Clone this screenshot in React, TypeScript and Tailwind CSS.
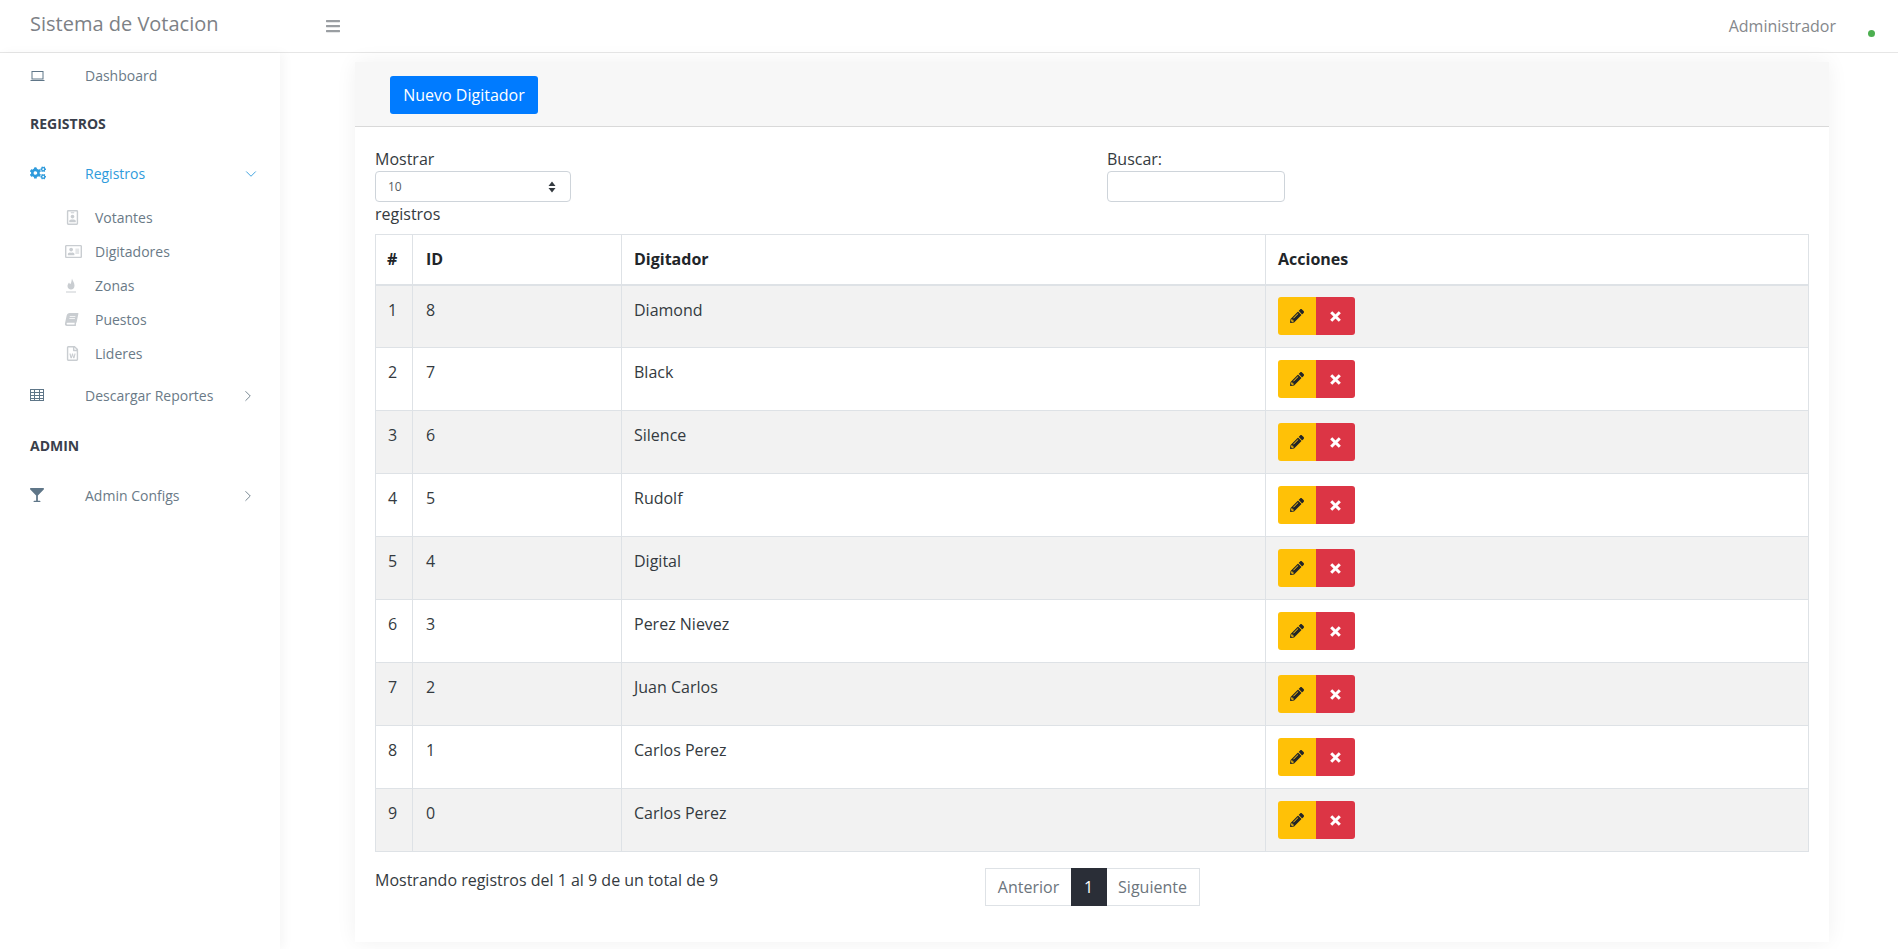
import React from 'react';
import { ChevronDown, ChevronRight } from 'lucide-react';
import {
  FaBars,
  FaBook,
  FaCogs,
  FaGlassMartini,
  FaPencilAlt,
  FaRegAddressCard,
  FaRegFileWord,
  FaRegIdBadge,
} from 'react-icons/fa';

const rows = [
  { n: 1, id: 8, name: 'Diamond' },
  { n: 2, id: 7, name: 'Black' },
  { n: 3, id: 6, name: 'Silence' },
  { n: 4, id: 5, name: 'Rudolf' },
  { n: 5, id: 4, name: 'Digital' },
  { n: 6, id: 3, name: 'Perez Nievez' },
  { n: 7, id: 2, name: 'Juan Carlos' },
  { n: 8, id: 1, name: 'Carlos Perez' },
  { n: 9, id: 0, name: 'Carlos Perez' },
];

const FlameIcon = () => (
  <svg width="12" height="15" viewBox="0 0 12 15" fill="#c9cdd1">
    <path d="M7 0.5C7.5 3 9.5 4.5 9.5 7.5 9.5 10 8 11.5 6 11.5S2.5 10 2.5 8C2.5 6.5 3.5 5.5 4 4.5 4.5 5.5 5 6 5.5 6 6.5 4.5 6.5 2.5 7 0.5Z" />
    <rect x="1" y="13.5" width="10" height="1" />
  </svg>
);

const subItems = [
  { label: 'Votantes', icon: <FaRegIdBadge className="text-[15px]" /> },
  { label: 'Digitadores', icon: <FaRegAddressCard className="text-[17px]" /> },
  { label: 'Zonas', icon: <FlameIcon /> },
  { label: 'Puestos', icon: <FaBook className="text-[13px] -skew-x-12" /> },
  { label: 'Lideres', icon: <FaRegFileWord className="text-[15px]" /> },
];

const LaptopIcon = () => (
  <svg width="15" height="12" viewBox="0 0 15 12" fill="none" stroke="#5f7688" strokeWidth="1" className="mt-[2px]">
    <rect x="2" y="1.5" width="11" height="7.5" />
    <path d="M0.5 10.5h14" />
  </svg>
);

const TableIcon = () => (
  <svg width="14" height="12" viewBox="0 0 14 12" fill="none" stroke="#5f7688" strokeWidth="1">
    <rect x="0.5" y="0.5" width="13" height="11" />
    <path d="M0.5 3.5h13M0.5 6.5h13M0.5 9.5h13M4.5 0.5v11M9.5 0.5v11" />
  </svg>
);

const CloseIcon = () => (
  <svg width="11" height="11" viewBox="0 0 11 11" fill="none" stroke="#ffffff" strokeWidth="3">
    <path d="M1.2 1.2 9.8 9.8M9.8 1.2 1.2 9.8" />
  </svg>
);

const Sidebar = () => {
  return (
    <aside className="w-[280px] shrink-0 h-[896px] bg-white shadow-[4px_0_10px_rgba(0,0,0,0.04)] text-[14px] text-[#6a7a87]">
      <div className="flex items-center h-[44px] pl-[30px]">
        <span className="w-[55px] flex"><LaptopIcon /></span>
        <span>Dashboard</span>
      </div>
      <div className="pl-[30px] mt-[17px] h-[20px] leading-[20px] text-[14px] font-bold text-[#3a3f4b]">REGISTROS</div>
      <div className="flex items-center h-[44px] mt-[17px] pl-[30px] pr-[20px] text-[#2f9bdc]">
        <span className="w-[55px] flex"><FaCogs className="text-[16px]" /></span>
        <span className="flex-1">Registros</span>
        <ChevronDown size={18} strokeWidth={1.2} className="mt-[2px]" />
      </div>
      <div className="mt-[5px]">
        {subItems.map((s) => (
          <div key={s.label} className="flex items-center h-[34px] pl-[65px]">
            <span className="w-[30px] flex text-[#c9cdd1]">{s.icon}</span>
            <span>{s.label}</span>
          </div>
        ))}
      </div>
      <div className="flex items-center h-[50px] pl-[30px] pr-[23px]">
        <span className="w-[55px] flex"><TableIcon /></span>
        <span className="flex-1">Descargar Reportes</span>
        <ChevronRight size={18} strokeWidth={1.2} className="mt-[2px]" />
      </div>
      <div className="pl-[30px] mt-[16px] h-[20px] leading-[20px] text-[14px] font-bold text-[#3a3f4b]">ADMIN</div>
      <div className="flex items-center h-[50px] mt-[14px] pl-[30px] pr-[23px]">
        <span className="w-[55px] flex"><FaGlassMartini className="text-[14px] text-[#5f7688]" /></span>
        <span className="flex-1">Admin Configs</span>
        <ChevronRight size={18} strokeWidth={1.2} className="mt-[2px]" />
      </div>
    </aside>
  );
};

const App: React.FC = () => {
  return (
    <div className="h-[949px] overflow-hidden bg-white font-['Open_Sans',sans-serif] text-[16px] text-[#343a40]">
      <header className="h-[53px] flex items-center border-b border-[#e6e6e6] bg-white">
        <div className="w-[341px] pl-[30px] flex items-center">
          <span className="flex-1 text-[20px] text-[#7d8186] -mt-[4px]">Sistema de Votacion</span>
          <FaBars className="text-[16px] text-[#9a9ea2]" />
        </div>
        <div className="flex-1" />
        <div className="relative pr-[62px] text-[16px] text-[#85888c]">
          Administrador
          <span className="absolute right-[23px] top-[16px] w-[7px] h-[7px] rounded-full bg-[#4caf50]" />
        </div>
      </header>
      <div className="flex">
        <Sidebar />
        <main className="flex-1 pl-[75px] pr-[70px] pt-[9px]">
          <div className="h-[880px] bg-white shadow-[0_0_20px_rgba(0,0,0,0.06)]">
            <div className="h-[65px] bg-[#f7f7f7] border-b border-[#d9d9d9] pl-[35px] pt-[14px]">
              <button className="h-[38px] w-[148px] rounded-[3px] bg-[#007bff] text-white text-[16px]">Nuevo Digitador</button>
            </div>
            <div className="px-[20px] pt-[20px]">
              <div className="grid grid-cols-2 h-[87px]">
                <div>
                  <div className="leading-[24px]">Mostrar</div>
                  <div className="w-[196px] h-[31px] border border-[#ced4da] rounded-[4px] flex items-center justify-between pl-[12px] pr-[14px] text-[12px] text-[#555c63]">
                    <span>10</span>
                    <svg width="8" height="12" viewBox="0 0 8 12" fill="#343a40">
                      <path d="M4 0.5 7.5 5H0.5zM4 11.5 0.5 7h7z" />
                    </svg>
                  </div>
                  <div className="leading-[24px]">registros</div>
                </div>
                <div className="pl-[15px]">
                  <div className="leading-[24px]">Buscar:</div>
                  <div className="w-[178px] h-[31px] border border-[#ced4da] rounded-[4px]" />
                </div>
              </div>
              <table className="w-[1434px] table-fixed border-collapse">
                <colgroup>
                  <col className="w-[37px]" />
                  <col className="w-[209px]" />
                  <col className="w-[644px]" />
                  <col />
                </colgroup>
                <thead>
                  <tr className="h-[50px] font-bold text-[#212529] text-left">
                    <th className="border border-[#dee2e6] border-b-2 px-[11px]">#</th>
                    <th className="border border-[#dee2e6] border-b-2 px-[13px]">ID</th>
                    <th className="border border-[#dee2e6] border-b-2 px-[12px]">Digitador</th>
                    <th className="border border-[#dee2e6] border-b-2 px-[12px]">Acciones</th>
                  </tr>
                </thead>
                <tbody>
                  {rows.map((r) => (
                    <tr key={r.n} className="h-[63px] even:bg-white odd:bg-[#f2f2f2]">
                      <td className="border border-[#dee2e6] align-top pt-[12px] px-[12px]">{r.n}</td>
                      <td className="border border-[#dee2e6] align-top pt-[12px] px-[13px]">{r.id}</td>
                      <td className="border border-[#dee2e6] align-top pt-[12px] px-[12px]">{r.name}</td>
                      <td className="border border-[#dee2e6] px-[12px]">
                        <div className="flex">
                          <span className="w-[38px] h-[38px] bg-[#ffc107] rounded-l-[3px] flex items-center justify-center">
                            <FaPencilAlt className="text-[14px] text-[#212529]" />
                          </span>
                          <span className="w-[39px] h-[38px] bg-[#dc3545] rounded-r-[3px] flex items-center justify-center">
                            <CloseIcon />
                          </span>
                        </div>
                      </td>
                    </tr>
                  ))}
                </tbody>
              </table>
              <div className="grid grid-cols-12 mt-[16px]">
                <div className="col-span-5 leading-[24px]">Mostrando registros del 1 al 9 de un total de 9</div>
                <div className="col-span-7 pl-[12px]">
                  <div className="inline-flex h-[38px] border border-[#dee2e6] text-[#6c757d]">
                    <span className="w-[85px] flex items-center justify-center pl-[1px]">Anterior</span>
                    <span className="w-[36px] flex items-center justify-center bg-[#2a2e37] text-white -my-px">1</span>
                    <span className="w-[92px] flex items-center justify-center">Siguiente</span>
                  </div>
                </div>
              </div>
            </div>
          </div>
        </main>
      </div>
    </div>
  );
};

export default App;
